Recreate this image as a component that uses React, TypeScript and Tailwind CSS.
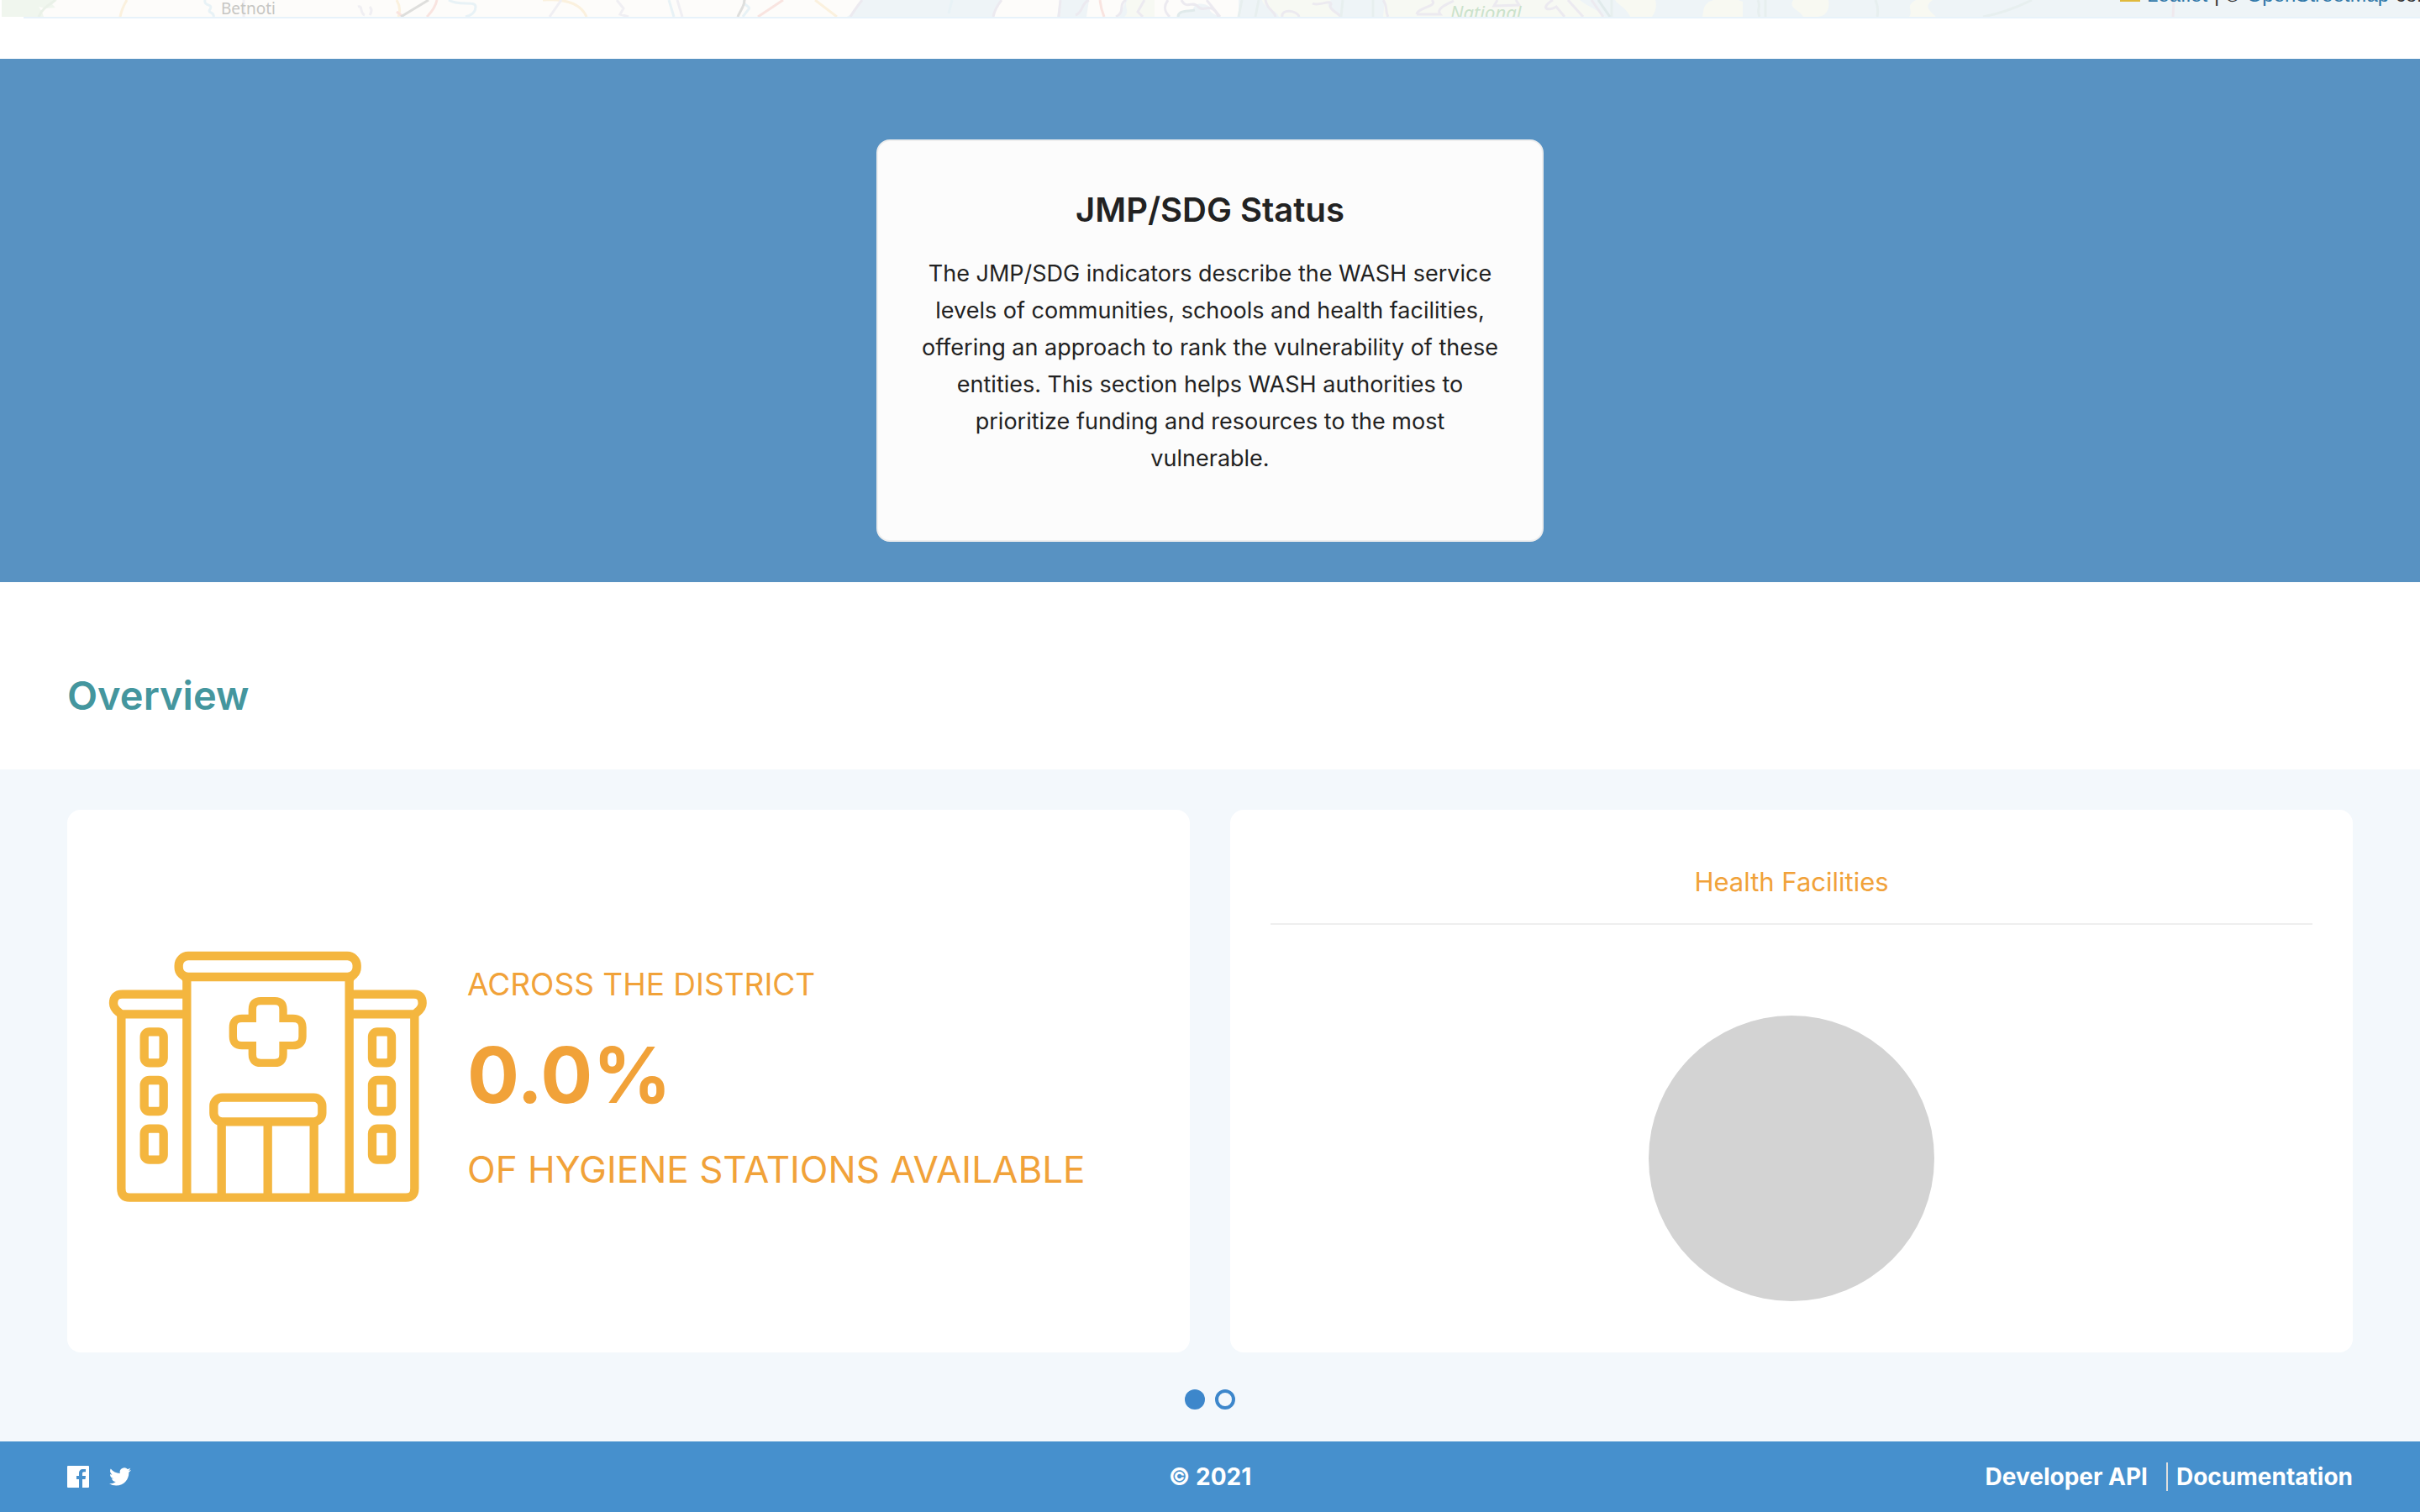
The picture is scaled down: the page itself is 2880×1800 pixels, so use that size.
import React from "react";

const WINDOW_TOPS = [352, 525, 698];

function MapStrip() {
  return (
    <div className="relative overflow-hidden">
      <svg
        className="block h-5 w-full bg-[#fdfcfa]"
        viewBox="0 0 2880 20"
        preserveAspectRatio="xMinYMin slice"
        fill="none"
        strokeWidth="3"
        aria-hidden="true"
      >
        <path fill="#f0f6ee" d="M0 0H68L62 5L66 9L54 10L46 8L50 14L52 20H0Z" />
        <path fill="#fff" d="M0 0H2V20H0Z" />
        <path fill="#eef4f7" d="M1026 0H1192C1186 7 1184 14 1181 20H1008C1018 14 1021 6 1026 0Z" />
        <path fill="#eef4f7" d="M1261 0H1296L1293 20H1258Z" />
        <path fill="#eef4f7" d="M1340 0H2880V20H1332Z" />
        <path fill="#fdfcfa" d="M1372 0H1474V20H1372Z" />
        <path fill="#eef4f7" d="M1402 20C1402 12 1412 14 1420 12C1420 4 1430 2 1440 8C1438 16 1446 16 1450 20Z" />
        <path fill="#f7f9f3" d="M1342 0H1374V20H1338C1346 14 1336 6 1342 0Z" />
        <path fill="#f7f9f3" d="M1502 0H1584C1574 8 1588 12 1594 20H1522C1520 12 1504 10 1502 0Z" />
        <path fill="#f7f9f3" d="M1648 0H1880C1890 8 1906 14 1910 20H1646Z" />
        <path fill="#f8f9f2" d="M1922 0H1970C1972 8 1970 14 1966 20H1940C1936 10 1926 6 1922 0Z" />
        <path fill="#f8f9f2" d="M2034 2C2044 -3 2064 -3 2074 2V20H2026C2028 12 2026 8 2034 2Z" />
        <path fill="#f8f9f2" d="M2134 0H2176C2178 10 2174 20 2162 20H2146C2142 12 2128 10 2134 0Z" />
        <path fill="#f8f9f2" d="M2280 0H2300C2288 8 2298 14 2304 20H2272C2278 12 2266 8 2280 0Z" />
        <path stroke="#eaf1e8" d="M66 0C58 6 50 10 46 20" />
        <path stroke="#fbf1de" d="M151 0Q145 10 143 20M646 0C676 -2 692 6 698 20M970 0L996 20M472 0Q478 10 474 20" />
        <path stroke="#e8f2f6" d="M244 0C242 8 254 4 250 11C246 16 256 14 254 20M534 0C546 8 566 0 566 8C566 14 562 18 554 20M796 0L802 20M886 0C882 7 896 7 890 12L884 20M1133 0L1129 16" />
        <path stroke="#f9e4e0" d="M520 0Q518 10 508 20M932 0L902 20M1309 0Q1310 10 1314 20M472 14L480 20" />
        <path stroke="#dededc" d="M510 0L477 20M886 0C886 8 880 14 878 20" />
        <path stroke="#f0eff3" d="M426 8C432 6 428 16 434 18M440 8Q444 12 440 18M734 0L742 10L738 17L748 20M668 0L654 20M806 0L812 20M290 0V20" />
        <path
          stroke="#eceaf0"
          d="M1026 0Q1018 10 1012 20M1192 0Q1184 10 1182 20M1262 0L1260 20M1296 0C1286 4 1290 14 1280 18M1340 0C1330 6 1340 14 1328 20M1362 0L1354 14L1360 20M1390 0C1384 8 1386 14 1392 20M1406 0C1412 12 1420 0 1426 8C1432 16 1442 0 1450 20M1436 0L1452 20M1506 0C1508 12 1516 12 1518 20M1526 20C1524 10 1544 12 1546 20M1562 4C1568 8 1584 -1 1584 5C1580 10 1590 14 1596 20M1646 0C1652 8 1648 14 1652 20M1704 0C1712 8 1688 8 1686 17M1686 17H1714C1708 10 1724 4 1730 1M1782 0L1778 7L1808 6L1804 0M1848 0C1832 10 1842 14 1852 8L1862 20M1866 0L1884 20M1894 0L1908 20"
        />
        <path stroke="#e7efef" d="M1478 0L1474 20M1498 0L1494 20M1598 0L1596 20M1634 0V20M2092 0C2096 8 2090 12 2094 20M2101 0V20M2232 0Q2236 10 2234 20M2418 0C2394 12 2378 16 2360 20M1918 0V20" />
        <path stroke="#e0eaeb" d="M1402 20C1402 12 1412 14 1422 12M1902 0L1916 20" />
        <path stroke="#efe9ee" d="M2587 0L2586 20" />
        <text x="263" y="17" fill="#c6c6c3" stroke="none" fontSize="19" fontFamily="Noto Sans, sans-serif">
          Betnoti
        </text>
        <text x="1726" y="23" fill="#cbe2cb" stroke="none" fontSize="22" fontStyle="italic" fontFamily="Noto Sans, sans-serif">
          National
        </text>
      </svg>
      <div className="ml-7 h-[2px] bg-[#e7f2fa]" />
      <div className="absolute -top-[22px] left-[2523px] flex h-8 items-center gap-2 font-['Liberation_Sans',sans-serif] text-2xl leading-8 whitespace-nowrap text-[#333]">
        <span className="h-4 w-6 bg-[#e0b93c]" />
        <a href="#leaflet" className="text-[#2f77a8]">Leaflet</a>
        <span>| ©</span>
        <a href="#osm" className="text-[#2f77a8]">OpenStreetMap</a>
        <span>contributors</span>
      </div>
    </div>
  );
}

function HospitalIcon() {
  return (
    <svg
      className="w-[380px] shrink-0"
      viewBox="54 60 1140 906"
      fill="none"
      stroke="#f4b63f"
      strokeWidth="31"
      aria-hidden="true"
    >
      <rect x="308" y="81" width="636" height="75" rx="34" />
      <path d="M337 150V944M917 150V944" />
      <path d="M313 150Q337 168 337 190M941 150Q917 168 917 190" strokeWidth="16" />
      <path d="M337 218H106Q75 218 75 250Q75 268 94 282L103 289H337" />
      <path d="M917 218H1148Q1178 218 1178 250Q1178 268 1159 282L1150 289H917" />
      <path d="M103 285V912Q103 944 133 944H1119Q1150 944 1150 912V285" />
      <rect x="433" y="587" width="387" height="86" rx="30" />
      <path d="M461 673V944M626 673V944M791 673V944" />
      {WINDOW_TOPS.map((y) => (
        <React.Fragment key={y}>
          <rect x="185" y={y} width="69" height="111" rx="18" />
          <rect x="999" y={y} width="69" height="111" rx="18" />
        </React.Fragment>
      ))}
      <path
        strokeWidth="28"
        d="M571 304V272Q571 242 601 242H651Q681 242 681 272V304H715Q750 304 750 336V369Q750 401 715 401H681V433Q681 463 651 463H601Q571 463 571 433V401H534Q502 401 502 369V336Q502 304 534 304Z"
      />
    </svg>
  );
}

function FacebookIcon() {
  return (
    <svg className="size-[26px]" viewBox="0 0 26 26" aria-hidden="true">
      <path
        fill="#fff"
        d="M1 0H25Q26 0 26 1V25Q26 26 25 26H18V16H21.5L22 12H18V9.5C18 8 18.5 7.300 20 7.300H22V4H19C15.500 4 14 6 14 9V12H11V16H14V26H1Q0 26 0 25V1Q0 0 1 0Z"
      />
    </svg>
  );
}

function TwitterIcon() {
  return (
    <svg className="size-[26px]" viewBox="0 0 24 24" aria-hidden="true">
      <path
        fill="#fff"
        d="M23.953 4.570a10 10 0 01-2.825.775 4.958 4.958 0 002.163-2.723c-.951.555-2.005.959-3.127 1.184a4.920 4.920 0 00-8.384 4.482C7.690 8.095 4.067 6.130 1.640 3.162a4.822 4.822 0 00-.666 2.475c0 1.710.870 3.213 2.188 4.096a4.904 4.904 0 01-2.228-.616v.060a4.923 4.923 0 003.946 4.827 4.996 4.996 0 01-2.212.085 4.936 4.936 0 004.604 3.417 9.867 9.867 0 01-6.102 2.105c-.390 0-.779-.023-1.170-.067a13.995 13.995 0 007.557 2.209c9.053 0 13.998-7.496 13.998-13.985 0-.210 0-.420-.015-.630A9.935 9.935 0 0024 4.590z"
      />
    </svg>
  );
}

export default function App() {
  return (
    <div className="bg-white font-['Inter',sans-serif] text-[#222]">
      <MapStrip />

      <section className="mt-12 flex justify-center bg-[#5892c2] px-12 pt-24 pb-12">
        <div className="w-full max-w-[794px] rounded-2xl border-2 border-[#eeeeee] bg-[#fcfcfc] px-12 pt-[58px] pb-[75px] text-center">
          <h2 className="text-[40px] leading-[48px] font-semibold">JMP/SDG Status</h2>
          <p className="mt-[30px] text-[27px] leading-[44px]">
            The JMP/SDG indicators describe the WASH service levels of communities, schools and
            health facilities, offering an approach to rank the vulnerability of these entities.
            This section helps WASH authorities to prioritize funding and resources to the most
            vulnerable.
          </p>
        </div>
      </section>

      <h2 className="px-20 pt-[103px] pb-14 text-[47px] leading-[64px] font-semibold text-[#44969e]">
        Overview
      </h2>

      <main className="bg-[#f3f8fc] px-20 pt-12 pb-[38px]">
        <div className="grid grid-cols-2 gap-12">
          <article className="flex items-center gap-12 rounded-2xl bg-white px-12 pt-12 pb-[58px] text-[#f1a239]">
            <HospitalIcon />
            <div>
              <p className="text-[37px] leading-[64px]">ACROSS THE DISTRICT</p>
              <p className="mt-7 text-[92px] leading-[96px] font-bold">0.0%</p>
              <p className="mt-8 text-[44px] leading-[64px] whitespace-nowrap">OF HYGIENE STATIONS AVAILABLE</p>
            </div>
          </article>
          <article className="flex flex-col items-center rounded-2xl bg-white px-12 pt-[62px] pb-[61px]">
            <h3 className="w-full border-b-2 border-[#eeeeee] pb-[25px] text-center text-[31px] leading-[48px] text-[#f1a239]">
              Health Facilities
            </h3>
            <div className="mt-[108px] size-[340px] rounded-full bg-[#d3d3d3]" />
          </article>
        </div>
        <div className="mt-11 flex justify-center gap-3">
          <button type="button" aria-label="Slide 1" className="size-6 rounded-full bg-[#3d87cb]" />
          <button type="button" aria-label="Slide 2" className="size-6 rounded-full border-4 border-[#3d87cb]" />
        </div>
      </main>

      <footer className="grid h-[84px] grid-cols-3 items-center bg-[#4690cd] px-20 text-[28px] leading-[34px] font-bold text-white">
        <div className="flex items-center gap-6">
          <a href="#facebook" aria-label="Facebook"><FacebookIcon /></a>
          <a href="#twitter" aria-label="Twitter"><TwitterIcon /></a>
        </div>
        <p className="text-center">© 2021</p>
        <nav className="flex justify-end">
          <a href="#api" className="border-r-2 border-[#dddddd] pr-[22px]">Developer API</a>
          <a href="#docs" className="pl-[10px]">Documentation</a>
        </nav>
      </footer>
    </div>
  );
}
